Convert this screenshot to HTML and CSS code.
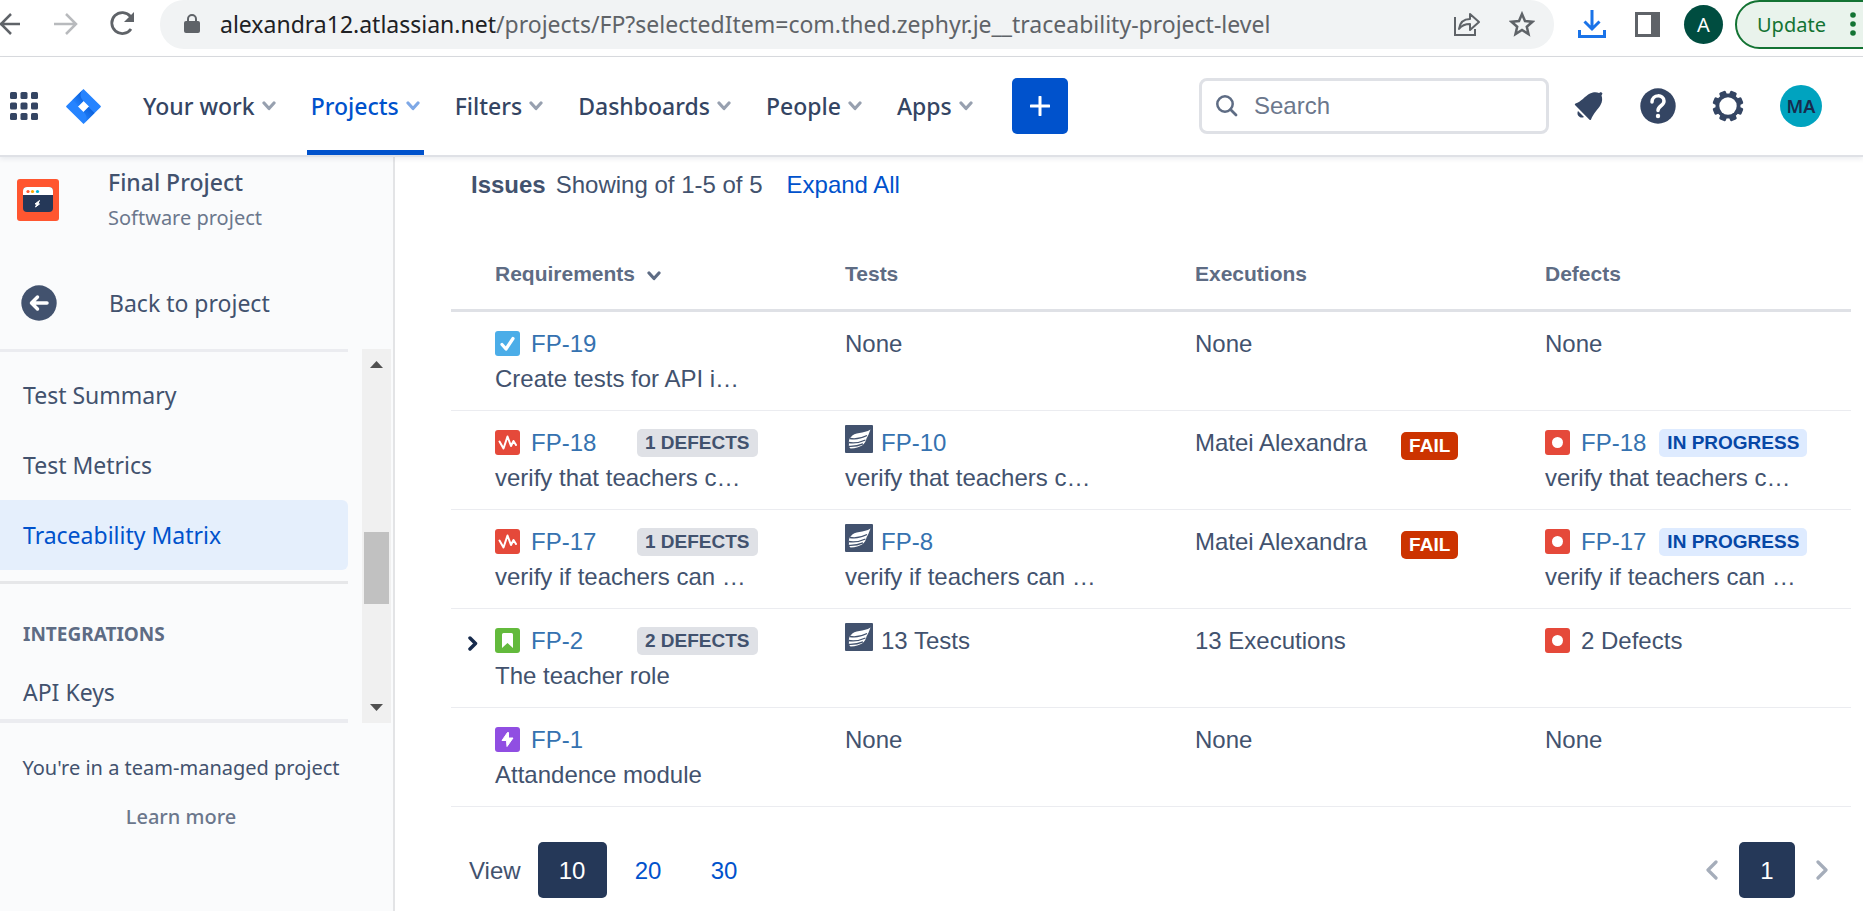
FILE: index.html
```html
<!DOCTYPE html>
<html lang="en">
<head>
<meta charset="utf-8">
<title>Traceability Matrix - Final Project</title>
<link rel="stylesheet" href="styles.css">
</head>
<body>
<svg class="sprite" aria-hidden="true">
  <symbol id="chevron" viewBox="0 0 14 10"><path d="M2 2l5 5.500l5-5.500" fill="none" stroke="currentColor" stroke-width="3.200" stroke-linecap="round" stroke-linejoin="round"/></symbol>
  <symbol id="task" viewBox="0 0 25 25"><rect width="25" height="25" rx="3" fill="#4bade8"/><path d="M7 13.500l4 4.500l7-10.500" fill="none" stroke="#fff" stroke-width="3.200" stroke-linecap="round" stroke-linejoin="round"/></symbol>
  <symbol id="pulse" viewBox="0 0 25 25"><rect width="25" height="25" rx="3" fill="#e5493a"/><path d="M4.500 11.500l4 7l4-12l3.500 9.500l2.500-5l2.500 4" fill="none" stroke="#fff" stroke-width="2" stroke-linejoin="round" stroke-linecap="round"/></symbol>
  <symbol id="story" viewBox="0 0 25 25"><rect width="25" height="25" rx="3" fill="#63ba3c"/><path d="M8.500 5h8q1.500 0 1.500 1.500V20l-5.500-5L7 20V6.500Q7 5 8.500 5z" fill="#fff"/></symbol>
  <symbol id="epic" viewBox="0 0 25 25"><rect width="25" height="25" rx="3" fill="#904ee2"/><path d="M12.500 5.500l-5.500 8h4.500l.5 6l6-8.500h-4.500v-5.500z" fill="#fff" stroke="#fff" stroke-linejoin="round"/></symbol>
  <symbol id="bug" viewBox="0 0 25 25"><rect width="25" height="25" rx="3" fill="#e5493a"/><circle cx="12.500" cy="12.500" r="5.500" fill="#fff"/></symbol>
  <symbol id="zephyr" viewBox="0 0 28 28"><rect width="28" height="28" rx="1" fill="#42526e"/><path d="M6 12C9 7 19 9 25.500 4.500C24 8 23.500 10.500 21.500 13.500C20.500 19 16 23 5.500 23.500C4 22 3.500 20.500 4 19C3.500 16.500 4 14 6 12z" fill="#fff"/><path d="M5 13.500C10 14.500 15 14 22 10.500M3.500 17.500C9 18.500 14 18 20.500 15M4 21.300C9 21.500 13 21 18 18.800" fill="none" stroke="#42526e" stroke-width="1.300"/></symbol>
</svg>

<div class="browser">
  <button class="plain" aria-label="Back"><svg width="22" height="24" viewBox="0 0 22 24"><path d="M20 12H0M11 2L1 12l10 10" fill="none" stroke="#5f6368" stroke-width="2.500"/></svg></button>
  <button class="plain forward" aria-label="Forward"><svg width="24" height="24" viewBox="0 0 24 24"><path d="M0 12h21M12 2l10 10l-10 10" fill="none" stroke="#b8babd" stroke-width="2.500"/></svg></button>
  <button class="plain reload" aria-label="Reload"><svg width="26" height="26" viewBox="0 0 26 26"><path d="M21.500 5.500A10.500 10.500 0 1 0 22 18" fill="none" stroke="#5f6368" stroke-width="2.800"/><path d="M25 1v10h-10z" fill="#5f6368"/></svg></button>
  <div class="address">
    <svg width="16" height="20" viewBox="0 0 16 20"><rect x="0" y="7" width="16" height="12" rx="2" fill="#5f6368"/><path d="M4 8V5a4 4 0 0 1 8 0v3" fill="none" stroke="#5f6368" stroke-width="2"/></svg>
    <span class="url"><b>alexandra12.atlassian.net</b>/projects/FP?selectedItem=com.thed.zephyr.je__traceability-project-level</span>
    <button class="plain" aria-label="Share"><svg width="28" height="26" viewBox="0 0 28 26"><path d="M2 6v18h20v-6" fill="none" stroke="#5f6368" stroke-width="2"/><path d="M6 18c1-7 5-10 11-10V3l9 8l-9 8v-6c-5 0-8 1-11 5z" fill="none" stroke="#5f6368" stroke-width="2" stroke-linejoin="round"/></svg></button>
    <button class="plain" aria-label="Bookmark"><svg width="26" height="26" viewBox="0 0 26 26"><path d="M13 3l3 7l7.500.7l-5.700 5l1.700 7.300l-6.500-4l-6.500 4l1.700-7.300l-5.700-5l7.500-.7z" fill="none" stroke="#5f6368" stroke-width="2.500"/></svg></button>
  </div>
  <div class="browser-tools">
    <button class="plain" aria-label="Downloads"><svg width="28" height="28" viewBox="0 0 28 28"><path d="M14 0v18M6.500 11.500l7.500 7.500l7.500-7.500M1.500 20v6.500h25V20" fill="none" stroke="#1a73e8" stroke-width="3"/></svg></button>
    <button class="plain" aria-label="Side panel"><svg width="25" height="25" viewBox="0 0 25 25"><path fill="#5f6368" fill-rule="evenodd" d="M0 0h25v25H0zM3 3v19h13V3z"/></svg></button>
    <button class="profile">A</button>
    <button class="update">Update<svg width="6" height="24" viewBox="0 0 6 24" fill="#137333"><circle cx="3" cy="3" r="2.800"/><circle cx="3" cy="12" r="2.800"/><circle cx="3" cy="21" r="2.800"/></svg></button>
  </div>
</div>

<header class="topbar">
  <button class="plain" aria-label="Switch to"><svg width="28" height="28" viewBox="0 0 28 28" fill="#344563"><rect width="7" height="7" rx="1.500"/><rect x="10.500" width="7" height="7" rx="1.500"/><rect x="21" width="7" height="7" rx="1.500"/><rect y="10.500" width="7" height="7" rx="1.500"/><rect x="10.500" y="10.500" width="7" height="7" rx="1.500"/><rect x="21" y="10.500" width="7" height="7" rx="1.500"/><rect y="21" width="7" height="7" rx="1.500"/><rect x="10.500" y="21" width="7" height="7" rx="1.500"/><rect x="21" y="21" width="7" height="7" rx="1.500"/></svg></button>
  <a class="logo" href="#" aria-label="Jira"><svg width="35" height="35" viewBox="0 0 35 35"><defs><linearGradient id="g1" x1="1" y1="0" x2=".3" y2="1"><stop offset="0" stop-color="#0052cc"/><stop offset="1" stop-color="#2684ff"/></linearGradient></defs><path fill="#2684ff" fill-rule="evenodd" d="M17.500 0L34.500 16.700q.8.800 0 1.600L17.500 35L.5 18.300q-.8-.8 0-1.600zM17.500 12l-5.500 5.500l5.500 5.500l5.500-5.500z"/><path d="M17.500 0c-4 4-4 8 0 12l-5 5l-6-6z" fill="url(#g1)"/><path d="M17.500 35c4-4 4-8 0-12l5-5l6 6z" fill="url(#g1)" opacity=".9"/></svg></a>
  <nav class="menu">
    <button>Your work<svg width="14" height="10"><use href="#chevron"/></svg></button>
    <button class="current">Projects<svg width="14" height="10"><use href="#chevron"/></svg></button>
    <button>Filters<svg width="14" height="10"><use href="#chevron"/></svg></button>
    <button>Dashboards<svg width="14" height="10"><use href="#chevron"/></svg></button>
    <button>People<svg width="14" height="10"><use href="#chevron"/></svg></button>
    <button>Apps<svg width="14" height="10"><use href="#chevron"/></svg></button>
  </nav>
  <button class="create" aria-label="Create"><svg width="20" height="20" viewBox="0 0 20 20"><path d="M10 1v18M1 10h18" stroke="#fff" stroke-width="3" stroke-linecap="round"/></svg></button>
  <label class="search">
    <svg width="22" height="22" viewBox="0 0 22 22"><circle cx="9" cy="9" r="7.700" fill="none" stroke="#5e6c84" stroke-width="2.500"/><path d="M14.500 14.500l5.500 5.500" stroke="#5e6c84" stroke-width="2.800" stroke-linecap="round"/></svg>
    <input type="text" placeholder="Search" aria-label="Search">
  </label>
  <div class="actions">
    <button class="plain" aria-label="Notifications"><svg width="30" height="30" viewBox="0 0 30 30" fill="#344563"><path d="M1.500 12.500C7 11 11 5 16 2.500c4-2 7-1.500 9-.5l2-1l1.500 1.500l-1 2c1 3 1 6-1 9.500c-2.500 4.500-7 8-9.500 14.500q-.6 1-1.500.2L1 14q-.7-1 .5-1.500z"/><path d="M4 20l6 6c-4 2-8-2-6-6z"/></svg></button>
    <button class="plain" aria-label="Help"><svg width="36" height="36" viewBox="0 0 36 36"><circle cx="18" cy="18" r="17.700" fill="#344563"/><path d="M12 14c0-8 12-8 12-1c0 5-6 4.500-6 9.500" fill="none" stroke="#fff" stroke-width="3.500" stroke-linecap="round"/><circle cx="18" cy="28" r="2.200" fill="#fff"/></svg></button>
    <button class="plain" aria-label="Settings"><svg width="32" height="32" viewBox="-16 -16 32 32"><g fill="#344563"><rect x="-3.500" y="-15.500" width="7" height="31" rx="1.500" transform="rotate(22.500)"/><rect x="-3.500" y="-15.500" width="7" height="31" rx="1.500" transform="rotate(67.500)"/><rect x="-3.500" y="-15.500" width="7" height="31" rx="1.500" transform="rotate(112.500)"/><rect x="-3.500" y="-15.500" width="7" height="31" rx="1.500" transform="rotate(157.500)"/><circle r="12.500"/></g><circle r="8.700" fill="#fff"/></svg></button>
    <button class="avatar">MA</button>
  </div>
</header>

<div class="body">
  <aside class="sidebar">
    <div class="project">
      <svg width="42" height="42" viewBox="0 0 42 42"><rect width="42" height="42" rx="3" fill="#ff5630"/><rect x="6" y="8" width="30" height="25" rx="4" fill="#253858"/><path d="M6 16v-4q0-4 4-4h22q4 0 4 4v4z" fill="#fff"/><circle cx="11" cy="12.500" r="1.600" fill="#ff5630"/><circle cx="15.500" cy="12.500" r="1.600" fill="#ffab00"/><circle cx="20.500" cy="12.500" r="1.600" fill="#00b8d9"/><path d="M22.500 21.500l-4.500 3.500h2l-1.500 3l4-3l-1.500-.5z" fill="#fff" stroke="#fff"/></svg>
      <div><div class="project-name">Final Project</div><div class="project-type">Software project</div></div>
    </div>
    <a class="back" href="#"><svg width="36" height="36" viewBox="0 0 36 36"><circle cx="18" cy="18" r="17.700" fill="#42526e"/><path d="M26 18H11M16.500 12l-6 6l6 6" fill="none" stroke="#fff" stroke-width="3.500" stroke-linecap="round" stroke-linejoin="round"/></svg>Back to project</a>
    <div class="side-scroll">
      <nav class="side-list">
        <a href="#">Test Summary</a>
        <a href="#">Test Metrics</a>
        <a class="selected" href="#">Traceability Matrix</a>
        <hr>
        <h2>INTEGRATIONS</h2>
        <a class="last" href="#">API Keys</a>
      </nav>
      <div class="scrollbar" aria-hidden="true">
        <svg width="13" height="7" viewBox="0 0 13 7"><path d="M0 7l6.500-7l6.500 7z" fill="#505050"/></svg>
        <div class="thumb"></div>
        <svg width="13" height="7" viewBox="0 0 13 7"><path d="M0 0l6.500 7l6.500-7z" fill="#505050"/></svg>
      </div>
    </div>
    <div class="side-foot"><p>You're in a team-managed project</p><a href="#">Learn more</a></div>
  </aside>

  <main class="content">
    <div class="summary"><strong>Issues</strong><span>Showing of 1-5 of 5</span><a href="#">Expand All</a></div>
    <table class="matrix">
      <thead><tr><th>Requirements<svg width="14" height="10"><use href="#chevron"/></svg></th><th>Tests</th><th>Executions</th><th>Defects</th></tr></thead>
      <tbody>
        <tr>
          <td><div class="line"><svg width="25" height="25"><use href="#task"/></svg><a class="key" href="#">FP-19</a></div><div>Create tests for API i…</div></td>
          <td>None</td><td>None</td><td>None</td>
        </tr>
        <tr>
          <td><div class="line"><svg width="25" height="25"><use href="#pulse"/></svg><a class="key" href="#">FP-18</a><span class="tag">1 DEFECTS</span></div><div>verify that teachers c…</div></td>
          <td><div class="line test"><svg width="28" height="28"><use href="#zephyr"/></svg><a href="#">FP-10</a></div><div>verify that teachers c…</div></td>
          <td><div class="line run">Matei Alexandra<span class="tag fail">FAIL</span></div></td>
          <td><div class="line"><svg width="25" height="25"><use href="#bug"/></svg><a href="#">FP-18</a><span class="tag progress">IN PROGRESS</span></div><div>verify that teachers c…</div></td>
        </tr>
        <tr>
          <td><div class="line"><svg width="25" height="25"><use href="#pulse"/></svg><a class="key" href="#">FP-17</a><span class="tag">1 DEFECTS</span></div><div>verify if teachers can …</div></td>
          <td><div class="line test"><svg width="28" height="28"><use href="#zephyr"/></svg><a href="#">FP-8</a></div><div>verify if teachers can …</div></td>
          <td><div class="line run">Matei Alexandra<span class="tag fail">FAIL</span></div></td>
          <td><div class="line"><svg width="25" height="25"><use href="#bug"/></svg><a href="#">FP-17</a><span class="tag progress">IN PROGRESS</span></div><div>verify if teachers can …</div></td>
        </tr>
        <tr>
          <td><div class="line"><button class="toggle" aria-label="Expand FP-2"><svg width="10" height="15" viewBox="0 0 10 15"><path d="M2 2l5.500 5.500l-5.500 5.500" fill="none" stroke="#172b4d" stroke-width="3.500" stroke-linecap="round" stroke-linejoin="round"/></svg></button><svg width="25" height="25"><use href="#story"/></svg><a class="key" href="#">FP-2</a><span class="tag">2 DEFECTS</span></div><div>The teacher role</div></td>
          <td><div class="line test"><svg width="28" height="28"><use href="#zephyr"/></svg>13 Tests</div></td>
          <td>13 Executions</td>
          <td><div class="line"><svg width="25" height="25"><use href="#bug"/></svg>2 Defects</div></td>
        </tr>
        <tr>
          <td><div class="line"><svg width="25" height="25"><use href="#epic"/></svg><a class="key" href="#">FP-1</a></div><div>Attandence module</div></td>
          <td>None</td><td>None</td><td>None</td>
        </tr>
      </tbody>
    </table>
    <div class="pager">
      <span class="view">View</span>
      <div class="sizes"><button class="active">10</button><button>20</button><button>30</button></div>
      <div class="pages">
        <button class="step" aria-label="Previous"><svg width="13" height="20" viewBox="0 0 13 20"><path d="M11 2L3 10l8 8" fill="none" stroke="#a5adba" stroke-width="3.200" stroke-linecap="round" stroke-linejoin="round"/></svg></button>
        <button class="active">1</button>
        <button class="step" aria-label="Next"><svg width="13" height="20" viewBox="0 0 13 20"><path d="M2 2l8 8l-8 8" fill="none" stroke="#a5adba" stroke-width="3.200" stroke-linecap="round" stroke-linejoin="round"/></svg></button>
      </div>
    </div>
  </main>
</div>
</body>
</html>
```

FILE: styles.css
```css
* { box-sizing: border-box; }
body {
  margin: 0;
  height: 100vh;
  display: flex;
  flex-direction: column;
  overflow: hidden;
  background: #fff;
  color: #42526e;
  font: 24px/35px "Noto Sans", sans-serif;
}
button { font: inherit; color: inherit; border: 0; background: none; padding: 0; }
a { color: inherit; text-decoration: none; }
svg { flex: none; display: block; }
.sprite { position: absolute; width: 0; height: 0; }
.plain { display: flex; }

/* Browser toolbar */
.browser {
  flex: none;
  display: flex;
  align-items: center;
  height: 57px;
  padding-bottom: 8px;
  border-bottom: 1px solid #dadce0;
}
.forward { margin-left: 32px; }
.reload { margin-left: 31px; }
.address {
  flex: 1;
  display: flex;
  align-items: center;
  height: 49px;
  margin-left: 25px;
  padding: 0 19px 0 24px;
  border-radius: 24px;
  background: #f1f3f4;
}
.url { flex: 1; margin-left: 20px; font-size: 23px; color: #5f6368; white-space: nowrap; }
.url b { font-weight: 400; color: #202124; }
.address .plain { margin-left: 28px; }
.browser-tools { display: flex; align-items: center; height: 49px; margin-left: 24px; overflow: hidden; }
.profile {
  width: 39px;
  height: 39px;
  margin-left: 24px;
  border-radius: 50%;
  background: #004d40;
  color: #fff;
  font-size: 20px;
}
.browser-tools .plain + .plain { margin-left: 29px; }
.update {
  display: flex;
  align-items: center;
  gap: 24px;
  width: 152px;
  height: 49px;
  margin: 0 -24px 0 12px;
  padding-left: 20px;
  border: 2px solid #137333;
  border-radius: 25px;
  background: #e9f3ec;
  color: #137333;
  font-size: 20px;
}

/* Top navigation */
.topbar {
  flex: none;
  position: relative;
  display: flex;
  align-items: center;
  height: 100px;
  padding-left: 10px;
  border-bottom: 2px solid #dfe1e6;
  box-shadow: 0 2px 5px rgba(9, 30, 66, .08);
}
.logo { margin-left: 28px; }
.menu { display: flex; gap: 27px; align-self: stretch; margin-left: 38px; }
.menu button {
  display: flex;
  align-items: center;
  gap: 7px;
  padding: 5px 4px 0;
  border-bottom: 5px solid transparent;
  color: #344563;
  font-size: 23px;
  font-weight: 500;
}
.menu svg { color: #97a0af; }
.menu .current { color: #0052cc; border-color: #0052cc; border-radius: 2px 2px 0 0; }
.menu .current svg { color: #7ea8e6; }
.create {
  display: flex;
  align-items: center;
  justify-content: center;
  width: 56px;
  height: 56px;
  margin-left: 35px;
  border-radius: 5px;
  background: #0052cc;
}
.search {
  display: flex;
  align-items: center;
  gap: 16px;
  width: 350px;
  height: 56px;
  margin-left: auto;
  padding-left: 14px;
  border: 3px solid #dfe1e6;
  border-radius: 8px;
}
.search input {
  flex: 1;
  min-width: 0;
  padding: 0;
  border: 0;
  outline: 0;
  background: none;
  font: 24px "Liberation Sans", sans-serif;
}
.search input::placeholder { color: #6b778c; }
.actions { display: flex; align-items: center; gap: 36px; margin: 0 41px 0 25px; }
.avatar {
  width: 42px;
  height: 42px;
  border-radius: 50%;
  background: #00a3bf;
  color: #172b4d;
  font-size: 18px;
  font-weight: 600;
}

/* Sidebar */
.body { flex: 1; display: flex; min-height: 0; }
.sidebar { flex: none; width: 395px; border-right: 2px solid #e3e4e6; background: #fafbfc; }
.project { display: flex; align-items: center; gap: 49px; padding: 8px 0 0 17px; }
.project-name { color: #42526e; font-size: 23px; font-weight: 500; }
.project-type { color: #6b778c; font-size: 20px; }
.back {
  display: flex;
  align-items: center;
  gap: 52px;
  height: 92px;
  margin-top: 22px;
  padding-left: 21px;
  font-size: 23px;
}
.side-scroll { display: flex; height: 374px; }
.side-list { flex: 1; overflow: hidden; border-top: 3px solid #ebecf0; border-bottom: 4px solid #ebecf0; font-size: 23px; }
.side-list a { display: flex; align-items: center; height: 70px; padding-left: 23px; }
.side-list a:first-child { margin-top: 8px; }
.side-list .selected { border-radius: 0 6px 6px 0; background: #e5effc; color: #0052cc; }
.side-list hr { height: 3px; margin: 11px 0 0; border: 0; background: #e6e7e9; }
.side-list h2 { margin: 33px 0 0 23px; font-size: 19px; font-weight: 700; line-height: 35px; color: #5e6c84; }
.side-list .last { height: 80px; }
.scrollbar {
  flex: none;
  display: flex;
  flex-direction: column;
  align-items: center;
  width: 29px;
  margin: 0 2px 0 14px;
  padding: 12px 0;
  background: #f0f0f0;
}
.thumb { width: 25px; height: 72px; margin: 164px 0 auto; background: #c1c1c1; }
.side-foot { width: 362px; padding-top: 27px; text-align: center; font-size: 20px; }
.side-foot p { margin: 0 0 14px; }
.side-foot a { color: #6b778c; font-weight: 500; }

/* Traceability table */
.content {
  flex: 1;
  min-width: 0;
  padding: 10px 12px 0 56px;
  font-family: "Liberation Sans", sans-serif;
}
.summary { display: flex; padding-left: 20px; }
.summary span { margin-left: 10px; }
.summary a { margin-left: 24px; color: #0052cc; }
.matrix { width: 100%; margin-top: 36px; border-collapse: separate; border-spacing: 0; table-layout: fixed; }
.matrix th {
  height: 74px;
  padding: 0 0 1px 44px;
  border-bottom: 3px solid #dfe1e6;
  color: #5e6c84;
  font-size: 21px;
  text-align: left;
  white-space: nowrap;
}
.matrix th svg { display: inline-block; margin-left: 12px; }
.matrix td { padding: 14px 0 14px 44px; border-bottom: 1px solid #ebecf0; vertical-align: top; white-space: nowrap; }
.line { display: flex; align-items: center; gap: 11px; height: 35px; }
.line a { color: #3572b0; }
.line .key { min-width: 95px; }
.test { gap: 8px; }
.test svg { align-self: flex-start; }
.run { gap: 34px; }
.tag {
  height: 28px;
  padding: 0 8px;
  border-radius: 5px;
  background: #dfe1e6;
  color: #42526e;
  font-size: 19px;
  font-weight: 700;
  line-height: 27px;
}
.fail { align-self: flex-end; background: #cc3300; color: #fff; }
.progress { margin-left: 2px; background: #deebff; color: #0747a6; }
.toggle { width: 16px; margin-left: -27px; padding-top: 5px; }

/* Pagination */
.pager { display: flex; align-items: center; margin-top: 35px; padding: 0 22px 0 18px; }
.sizes { display: flex; gap: 7px; margin-left: 17px; color: #0052cc; }
.sizes button { width: 69px; height: 56px; }
.pages { display: flex; align-items: center; gap: 21px; margin-left: auto; }
.pages .active { width: 56px; height: 56px; }
.pager .active { border-radius: 5px; background: #253858; color: #fff; }
```
